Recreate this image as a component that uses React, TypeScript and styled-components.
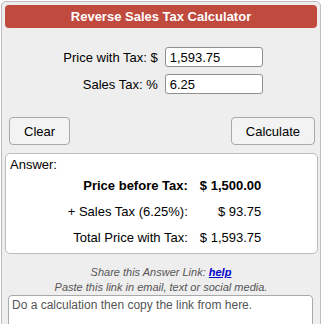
import React from "react";
import styled, { createGlobalStyle } from "styled-components";

const Global = createGlobalStyle`
  html, body { margin: 0; padding: 0; background: #ffffff; }
  body { font-family: "Liberation Sans", Arial, sans-serif; font-size: 13px; color: #000; }
  * { box-sizing: border-box; }
`;

const Panel = styled.div`
  margin: 1px 0 0 1px;
  width: 320px;
  height: 340px;
  background: #eeeeee;
  border: 1px solid #bdbdbd;
  border-radius: 5px;
  padding: 3px;
  display: flex;
  flex-direction: column;
`;

const Header = styled.div`
  height: 23px;
  flex-shrink: 0;
  background: #bf4a3d;
  border-radius: 4px;
  color: #ffffff;
  font-weight: bold;
  font-size: 13px;
  display: flex;
  align-items: center;
  justify-content: center;
`;

const Form = styled.div`
  display: grid;
  grid-template-columns: auto auto;
  grid-auto-rows: 20px;
  justify-content: center;
  column-gap: 7px;
  row-gap: 7px;
  padding-top: 19px;
  margin-left: 4px;
`;

const Label = styled.label`
  display: flex;
  align-items: center;
  justify-content: flex-end;
  font-size: 13px;
`;

const Input = styled.input`
  width: 98px;
  height: 20px;
  border: 1px solid #8f8f8f;
  border-radius: 3px;
  background: #fff;
  font-family: "Liberation Sans", Arial, sans-serif;
  font-size: 13px;
  padding: 0 4px;
  color: #000;
`;

const ButtonRow = styled.div`
  display: flex;
  justify-content: space-between;
  padding: 0 0 0 4px;
  margin-top: 23px;
  margin-right: 2px;
`;

const Button = styled.button`
  height: 28px;
  padding: 0 14px;
  background: #f3f3f3;
  border: 1px solid #a9a9a9;
  border-radius: 4px;
  font-family: "Liberation Sans", Arial, sans-serif;
  font-size: 13px;
  color: #000;
`;

const AnswerBox = styled.div`
  margin-top: 8px;
  margin-right: -1px;
  background: #fff;
  border: 1px solid #bdbdbd;
  border-radius: 5px;
  padding: 3px 4px 3px 4px;
`;

const AnswerTitle = styled.div`
  line-height: 15px;
`;

const Results = styled.div`
  display: grid;
  grid-template-columns: auto auto;
  grid-auto-rows: 26px;
  justify-content: center;
  column-gap: 12px;
  margin-left: 6px;
`;

const Cell = styled.div<{ $bold?: boolean }>`
  display: flex;
  align-items: center;
  justify-content: flex-end;
  font-weight: ${(p) => (p.$bold ? "bold" : "normal")};
`;

const Share = styled.div`
  margin-top: 11px;
  text-align: center;
  font-style: italic;
  font-size: 11px;
  line-height: 15px;
  color: #555;
`;

const Link = styled.a`
  color: #0000cc;
  font-weight: bold;
  text-decoration: underline;
`;

const ShareBox = styled.textarea`
  margin: 0 4px 0 3px;
  height: 50px;
  flex-shrink: 0;
  resize: none;
  border: 1px solid #a9a9a9;
  border-radius: 4px;
  background: #fff;
  font-family: "Liberation Sans", Arial, sans-serif;
  font-size: 12px;
  color: #555;
  padding: 2px 3px;
`;

export default function App() {
  return (
    <>
      <Global />
      <Panel>
        <Header>Reverse Sales Tax Calculator</Header>
        <Form>
          <Label>Price with Tax: $</Label>
          <Input defaultValue="1,593.75" />
          <Label>Sales Tax: %</Label>
          <Input defaultValue="6.25" />
        </Form>
        <ButtonRow>
          <Button>Clear</Button>
          <Button>Calculate</Button>
        </ButtonRow>
        <AnswerBox>
          <AnswerTitle>Answer:</AnswerTitle>
          <Results>
            <Cell $bold>Price before Tax:</Cell>
            <Cell $bold>$ 1,500.00</Cell>
            <Cell>+ Sales Tax (6.25%):</Cell>
            <Cell>$ 93.75</Cell>
            <Cell>Total Price with Tax:</Cell>
            <Cell>$ 1,593.75</Cell>
          </Results>
        </AnswerBox>
        <Share>
          Share this Answer Link: <Link href="#">help</Link>
          <br />
          Paste this link in email, text or social media.
        </Share>
        <ShareBox defaultValue="Do a calculation then copy the link from here." />
      </Panel>
    </>
  );
}
